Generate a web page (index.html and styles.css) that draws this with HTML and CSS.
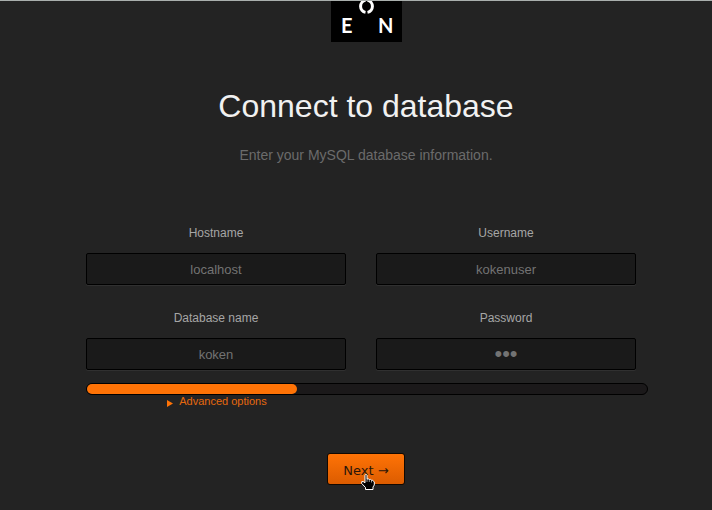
FILE: index.html
```html
<!DOCTYPE html>
<html lang="en">
<head>
<meta charset="utf-8">
<meta name="viewport" content="width=device-width, initial-scale=1">
<title>Connect to database</title>
<link rel="stylesheet" href="styles.css">
</head>
<body>
<main class="setup">
  <header class="intro">
    <svg class="logo" viewBox="0 0 71 41" aria-hidden="true">
      <g fill="none" stroke="#fff" stroke-width="3">
        <path d="M34.500 -.8A6 6.200 0 0 0 34.500 11.400"/>
        <path d="M36.500 -.8A6 6.200 0 0 1 36.500 11.400"/>
      </g>
      <text class="logo-letter" x="10" y="32">E</text>
      <text class="logo-letter" x="47" y="32">N</text>
    </svg>
    <h1 class="title">Connect to database</h1>
    <p class="subtitle">Enter your MySQL database information.</p>
  </header>
  <form class="form">
    <div class="fields">
      <div class="field">
        <label for="host">Hostname</label>
        <input id="host" type="text" value="localhost">
      </div>
      <div class="field">
        <label for="user">Username</label>
        <input id="user" type="text" value="kokenuser">
      </div>
      <div class="field">
        <label for="database">Database name</label>
        <input id="database" type="text" value="koken">
      </div>
      <div class="field">
        <label for="password">Password</label>
        <input id="password" type="password" value="abc">
      </div>
    </div>
    <div class="progress"><div class="progress-fill"></div></div>
    <div class="advanced">
      <a href="#advanced"><svg class="marker" viewBox="0 0 6 7" aria-hidden="true"><path d="M0 0L6 3.5L0 7Z"/></svg>Advanced options</a>
    </div>
    <div class="actions">
      <button class="next" type="button">Next →
        <svg class="cursor" viewBox="0 0 14 16" aria-hidden="true">
          <path d="M4 1.5Q4 .5 5 .5Q6 .5 6 1.5V5Q7.5 4.500 8.300 5.500Q9.800 5 10.500 6.200Q12 5.800 12.500 7.200L13.300 8V11L12 13V15.500H4.500V13.500L.7 9.500V7.700Q1.800 6.700 4 8.800Z"/>
          <path class="cursor-lines" d="M6 5V8M8.300 5.500V8M10.500 6.200V8.500"/>
        </svg>
      </button>
    </div>
  </form>
</main>
</body>
</html>
```
FILE: styles.css
```css
* {
  box-sizing: border-box;
}

body {
  margin: 0;
  min-height: 100vh;
  border-top: 1px solid #a9afad;
  background: #232323;
  color: #a6a6a6;
  font-family: "Liberation Sans", Arial, sans-serif;
}

.setup {
  padding-left: 20px;
}

.intro {
  text-align: center;
}

.logo {
  display: block;
  width: 71px;
  height: 41px;
  margin: 0 auto;
  background: #000;
}

.logo-letter {
  fill: #fff;
  font: bold 20px Lato, sans-serif;
}

.title {
  margin: 44px 0 0;
  color: #f1f1f1;
  font-size: 32px;
  font-weight: 400;
  line-height: 40px;
}

.subtitle {
  margin: 20px 0 0;
  color: #6b6b6b;
  font-size: 14px;
  line-height: 18px;
}

.form {
  max-width: 560px;
  margin: 61px auto 0;
}

.fields {
  display: grid;
  grid-template-columns: 1fr 1fr;
  gap: 25px 30px;
  padding-right: 10px;
}

.field {
  display: flex;
  flex-direction: column;
  gap: 12px;
  text-align: center;
}

.field label {
  font-size: 12px;
  line-height: 16px;
}

.field input {
  width: 100%;
  height: 32px;
  padding: 0 8px;
  border: 1px solid #000;
  border-radius: 2px;
  outline: none;
  background: #1a1a1a;
  box-shadow: 0 1px 0 #303030;
  color: #737373;
  font: 13px "Liberation Sans", Arial, sans-serif;
  text-align: center;
}

.field input[type="password"] {
  font-size: 22px;
}

.progress {
  height: 12px;
  margin-top: 13px;
  margin-right: -2px;
  border: 1px solid #000;
  border-radius: 6px;
  background: #1b191a;
}

.progress-fill {
  width: 210px;
  height: 10px;
  border-radius: 5px;
  background: #ff7306;
}

.advanced {
  width: 262px;
  color: #e6690e;
  font-size: 11px;
  line-height: 12px;
  text-align: center;
}

.advanced a {
  color: inherit;
  text-decoration: none;
}

.marker {
  width: 6px;
  height: 7px;
  margin-right: 6px;
  vertical-align: -2px;
  fill: #ff7306;
}

.actions {
  display: flex;
  justify-content: center;
  margin-top: 46px;
}

.next {
  position: relative;
  height: 32px;
  padding: 2px 15px 0;
  border: 1px solid #120800;
  border-radius: 3px;
  background: linear-gradient(#ff7306, #dc5c00);
  color: #2b1609;
  font: 13px "DejaVu Sans", sans-serif;
  cursor: pointer;
}

.cursor {
  position: absolute;
  top: 20px;
  left: 33px;
  width: 14px;
  height: 16px;
  fill: #000;
  stroke: #fff;
  stroke-width: 1;
}

.cursor-lines {
  fill: none;
  stroke-width: 0.6;
}
```
